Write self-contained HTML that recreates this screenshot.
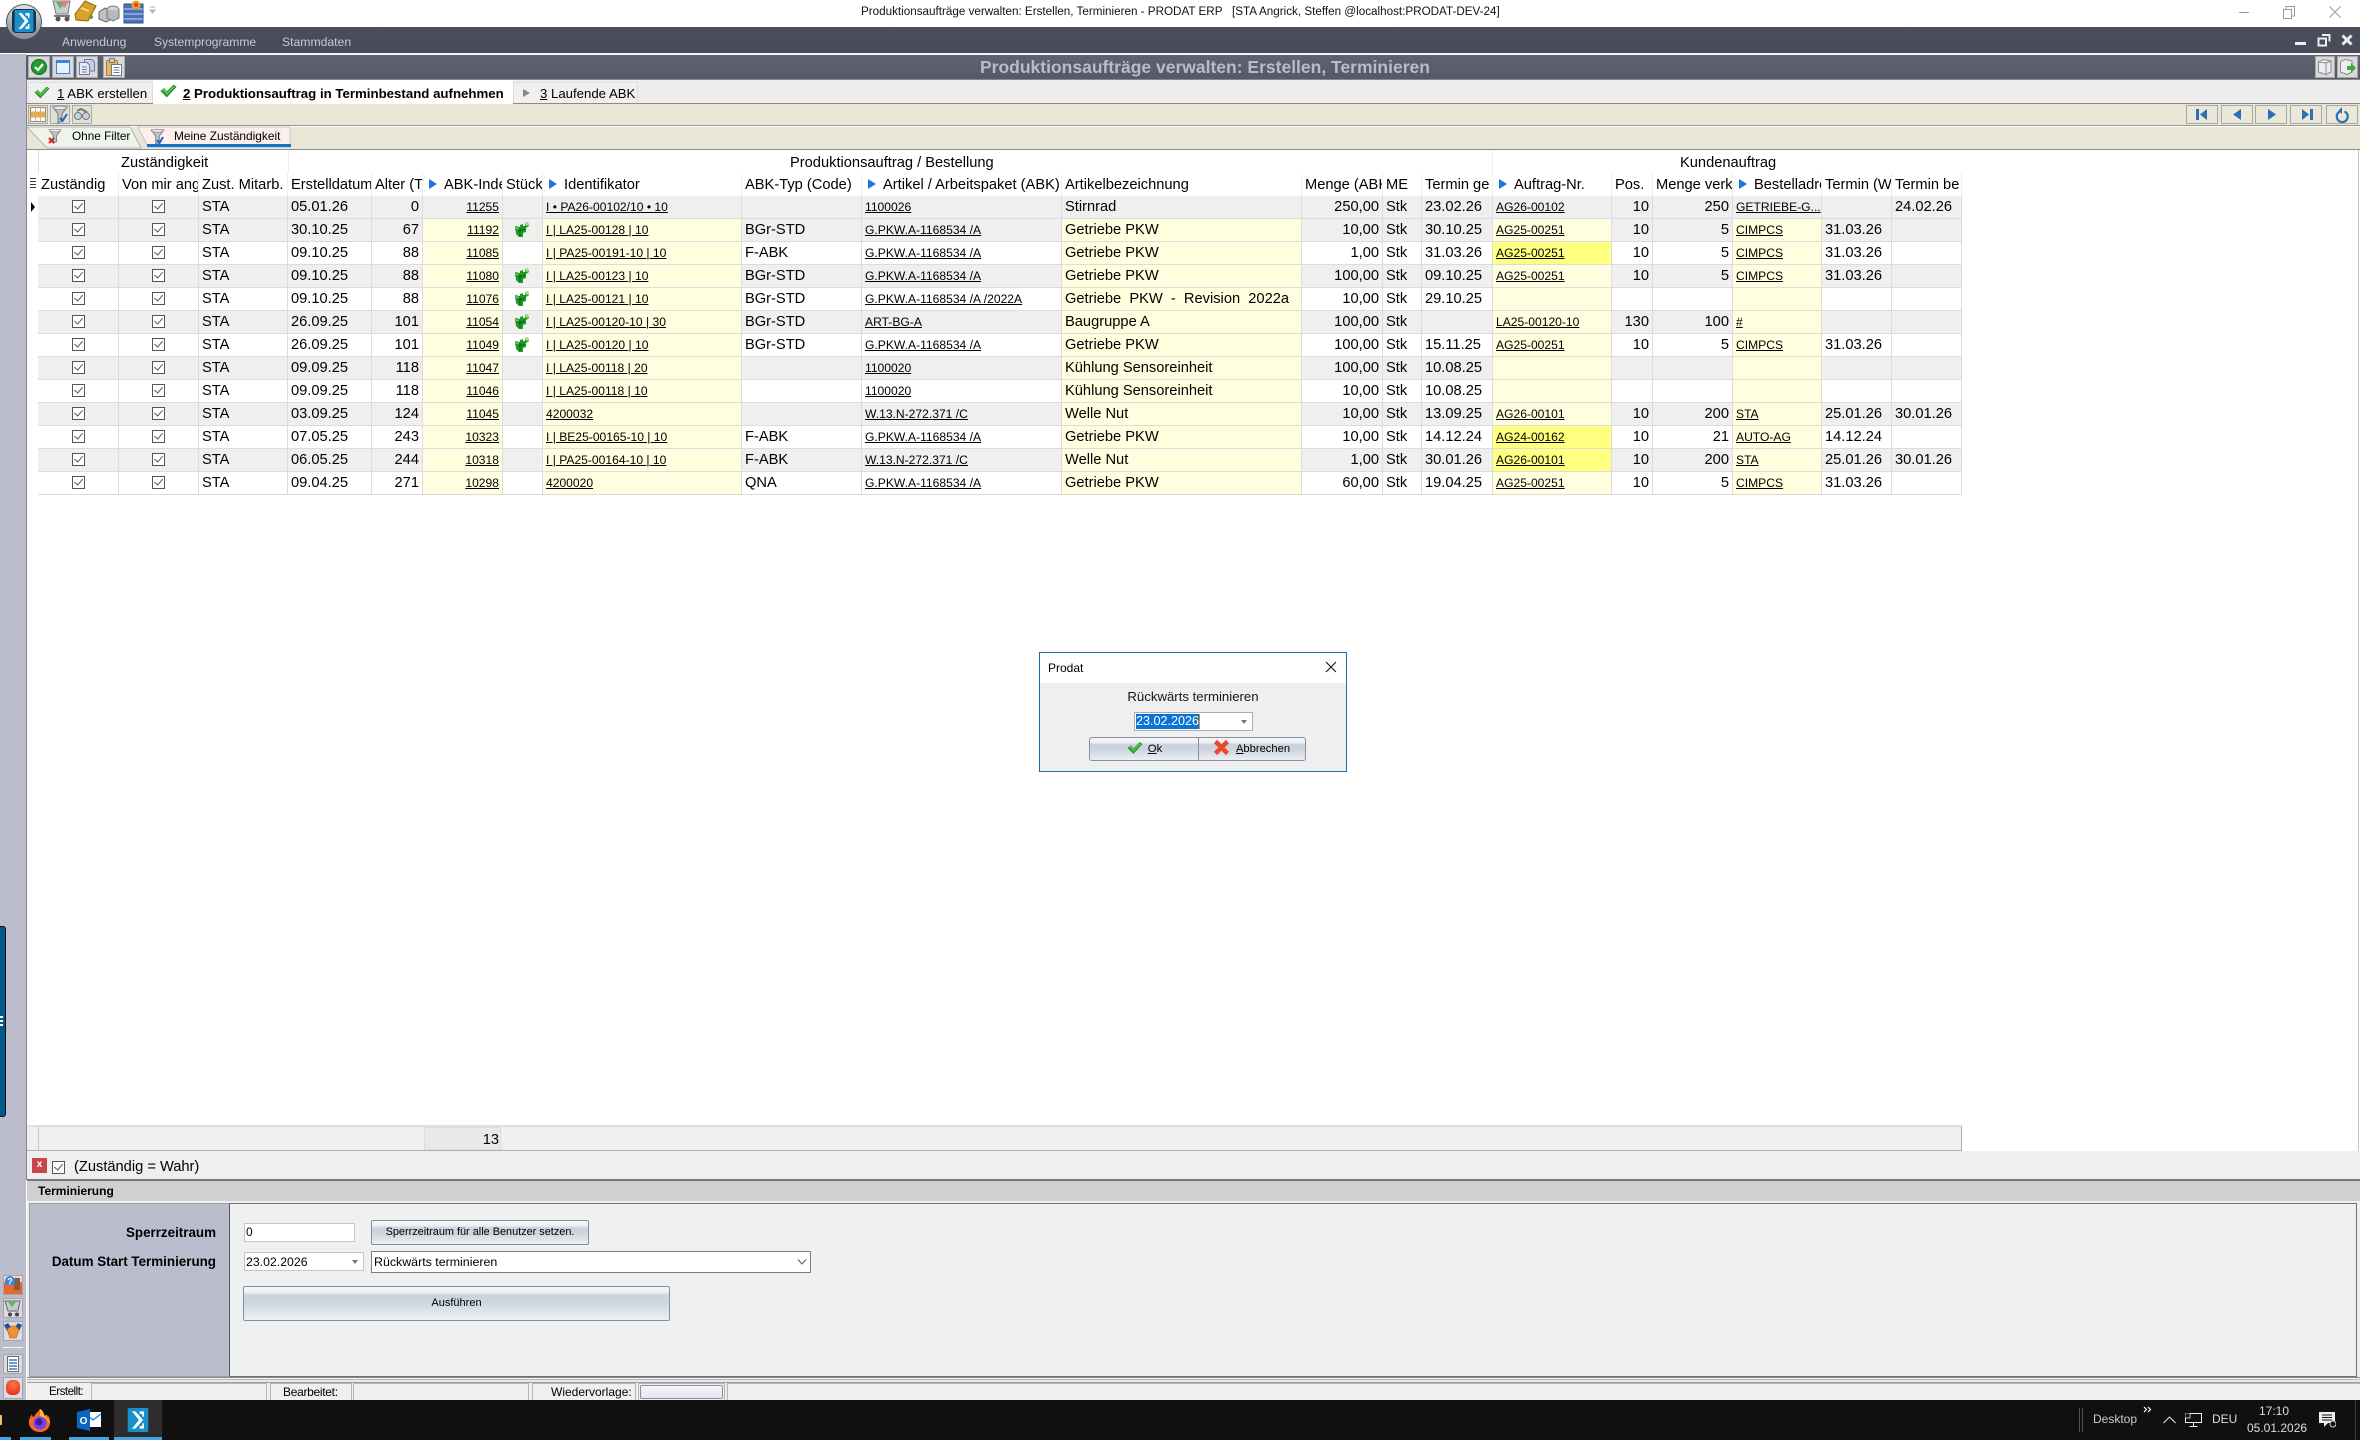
<!DOCTYPE html>
<html lang="de"><head><meta charset="utf-8"><title>Produktionsaufträge verwalten</title>
<style>
html,body{margin:0;padding:0;background:#fff}
body{width:2360px;height:1440px;position:relative;overflow:hidden;font-family:"Liberation Sans",sans-serif;color:#000}
.a{position:absolute}
.t{position:absolute;white-space:nowrap}
table{position:absolute;left:38px;top:173px;width:1924px;border-collapse:separate;border-spacing:0;table-layout:fixed;font-size:14.67px}
td,th{height:22px;padding:0 3px;box-sizing:content-box;overflow:hidden;white-space:nowrap;font-weight:normal;text-align:left;border-right:1px solid #dcdcdc;border-bottom:1px solid #dcdcdc;line-height:22px}
th{background:#fff;border-bottom:0;border-right:1px solid #eee;padding:2px 1px 0 3px;position:relative;height:21px;line-height:21px}
th.ar{padding-left:21px}
th.ar:before{content:"";position:absolute;left:6px;top:6px;border-left:8px solid #1b78d8;border-top:5px solid transparent;border-bottom:5px solid transparent}
tr.g td{background:#efefef}
tr td.y,tr.g td.y{background:#ffffe0}
tr td.Y,tr.g td.Y{background:#ffff80}
td.r{text-align:right}
td.c{text-align:center;padding:0;height:22px}
td.l{font-size:12.1px;text-decoration:underline}
i.cb{display:inline-block;width:11px;height:11px;border:1px solid #555;background:#fff;position:relative;vertical-align:-2px}
i.cb:after{content:"";position:absolute;left:3px;top:0;width:4px;height:7px;border-right:1px solid #555;border-bottom:1px solid #555;transform:rotate(40deg)}
td svg{display:block;margin:0 0 2px 11px}
.btn{position:absolute;box-sizing:border-box;border:1px solid #8a8e98;border-radius:2px;background:linear-gradient(#f2f4f6 0,#eef0f3 20%,#c9d3de 30%,#cdd6df 55%,#edeff2 100%);text-align:center}
.tb{position:absolute;box-sizing:border-box;border:1px solid #a9a9a9;background:#e6e6e6}
.nav{position:absolute;top:105px;width:32px;height:19px;box-sizing:border-box;border:1px solid #a8a8a8;background:#ebe8d9}
.si{position:absolute;left:3px;width:20px;height:20px;box-sizing:border-box;border:1px solid #a6a6a6;background:#dcdce0}
.st{position:absolute;top:1383px;height:17px;box-sizing:border-box;border-left:1px solid #b5b5b5;border-top:1px solid #b5b5b5;border-right:1px solid #b5b5b5}
.tu{position:absolute;top:1437px;height:3px;background:#4aa3e0}
</style></head><body>

<svg width="0" height="0" style="position:absolute"><defs>
<symbol id="pz" viewBox="0 0 15 15"><path d="M1 4 L6 5 L6 3 L9 2 L9 4 L11 4 L11 1 L14 0 L15 4 L12 6 L12 10 L9 11 L9 15 L5 15 L2 12 Z" fill="#1f9a25"/><path d="M6 6 L6 14 M1.5 7 L6 9 M6 9 L11 7" stroke="#0b5e10" stroke-width="1" fill="none"/><path d="M11 1 L14 0 L15 3 L12 4 Z" fill="#9be87a"/><path d="M2 5 L5 6 L4 8 L2 7 Z" fill="#62cf58"/></symbol>
<symbol id="ck" viewBox="0 0 20 16"><path d="M1 8 L5 5 L8 9 L16 1 L19 3 L8 15 Z" fill="#2f9e2f" stroke="#1f7a24" stroke-width=".6"/><path d="M3 8 L5 6.5 L8 11 L17 2.5" stroke="#7fd67a" fill="none" stroke-width="1"/></symbol>
<symbol id="fn" viewBox="0 0 16 18"><path d="M1 1 H15 L10 8 V15 L6 17 V8 Z" fill="#bfc2c6" stroke="#74777b" stroke-width="1"/><ellipse cx="8" cy="2" rx="7" ry="1.5" fill="#eceded" stroke="#74777b" stroke-width=".6"/></symbol>
<symbol id="prod" viewBox="0 0 24 28"><path d="M2 0 H22 Q24 0 24 2 V26 Q24 28 22 28 H2 Q0 28 0 26 V2 Q0 0 2 0 Z" fill="#1a8fc8"/><path d="M5 4 H9 L18 14 L9 24 H5 L13 14 Z M14 4 H19 V10 H17 V7 H14 Z M14 24 H19 V18 H17 V21 H14 Z" fill="#fff"/></symbol>
</defs></svg>

<!-- window title bar -->
<div class="a" style="left:0;top:0;width:2360px;height:27px;background:#fff"></div>
<div class="t" style="left:861px;top:5px;font-size:11.67px;line-height:14px;color:#111;white-space:pre">Produktionsaufträge verwalten: Erstellen, Terminieren - PRODAT ERP   [STA Angrick, Steffen @localhost:PRODAT-DEV-24]</div>
<!-- quick access -->
<svg class="a" style="left:50px;top:0" width="108" height="24" viewBox="0 0 108 24">
<path d="M3 1 H20 L18 14 H6 Z" fill="#c9ccd3" stroke="#7a7f8c"/><path d="M6 2 L10 9 L15 2 Z" fill="#5cb85c"/><path d="M10 1 L14 8 L19 1 Z" fill="#e27c7c"/><circle cx="8" cy="19" r="2.5" fill="#555"/><circle cx="17" cy="19" r="2.5" fill="#555"/><path d="M4 16 H20" stroke="#777" stroke-width="2"/>
<path d="M25 14 L35 1 L46 6 L38 21 L26 20 Z" fill="#d9a128" stroke="#8f6510"/><path d="M31 8 L39 11" stroke="#f2dc8e" stroke-width="2"/><circle cx="41" cy="17" r="2" fill="#4da64d"/>
<path d="M49 12 L55 8 L62 12 V19 L56 22 L49 19 Z" fill="#bfc1c4" stroke="#666"/><ellipse cx="63" cy="10" rx="6" ry="4" fill="#d2d4d6" stroke="#777"/><path d="M57 10 V18 L63 21 L69 18 V10" fill="#b7b9bc" stroke="#777"/>
<rect x="74" y="4" width="19" height="19" fill="#4a72b8" stroke="#2f4d86"/><path d="M74 9 H93 M74 14 H93 M74 19 H93" stroke="#c9d6ec" stroke-width="1"/><circle cx="86" cy="5" r="4.5" fill="#f0a020"/><circle cx="86" cy="5" r="2" fill="#e0402a"/>
<path d="M100 7 H105 M100 10 H105 L102.5 13 Z" stroke="#aeb2ba" fill="#aeb2ba"/>
</svg>
<!-- window controls -->
<div class="a" style="left:2239px;top:12px;width:10px;height:1px;background:#9a9a9a"></div>
<svg class="a" style="left:2283px;top:6px" width="12" height="13"><path d="M.5 3.5 H8.5 V12.5 H.5 Z M3 3 V.5 H11.5 V10 H9" fill="none" stroke="#9a9a9a"/></svg>
<svg class="a" style="left:2329px;top:6px" width="12" height="12"><path d="M.5 .5 L11.5 11.5 M11.5 .5 L.5 11.5" stroke="#9a9a9a"/></svg>

<!-- menu bar -->
<div class="a" style="left:0;top:27px;width:2360px;height:26px;background:linear-gradient(#4b4e5c,#474a58)"></div>
<div class="t" style="left:62px;top:35px;font-size:12.2px;line-height:14px;color:#c9cad0">Anwendung</div>
<div class="t" style="left:154px;top:35px;font-size:12.1px;line-height:14px;color:#c9cad0">Systemprogramme</div>
<div class="t" style="left:282px;top:35px;font-size:12.2px;line-height:14px;color:#c9cad0">Stammdaten</div>
<div class="a" style="left:2295px;top:42px;width:11px;height:3px;background:#eee"></div>
<svg class="a" style="left:2317px;top:33px" width="14" height="14"><path d="M1.5 5.5 H9 V12.5 H1.5 Z" fill="none" stroke="#eee" stroke-width="2"/><path d="M5 2 H12.5 V8.5" fill="none" stroke="#eee" stroke-width="2"/></svg>
<svg class="a" style="left:2341px;top:34px" width="12" height="12"><path d="M1.5 1.5 L10.5 10.5 M10.5 1.5 L1.5 10.5" stroke="#eee" stroke-width="3"/></svg>

<!-- logo -->
<div class="a" style="left:6px;top:4px;width:36px;height:36px;border-radius:50%;box-sizing:border-box;border:1px solid #50525a;background:linear-gradient(#e0e1e6,#a8aab4 55%,#8d8f9a)"></div>
<div class="a" style="left:12px;top:9px;width:24px;height:24px;border-radius:4px;background:#12384f"></div>
<svg class="a" style="left:13px;top:10px" width="22" height="22"><use href="#prod"/></svg>

<!-- left strip -->
<div class="a" style="left:0;top:54px;width:26px;height:1346px;background:#bbbdcd"></div>
<div class="a" style="left:26px;top:54px;width:1px;height:1126px;background:#85868f"></div>
<div class="a" style="left:0;top:926px;width:6px;height:191px;background:#005a8e;border:1px solid #111;border-left:0;border-radius:0 3px 3px 0;box-sizing:border-box"></div>
<div class="a" style="left:0;top:1016px;width:3px;height:2px;background:#fff"></div><div class="a" style="left:0;top:1020px;width:3px;height:2px;background:#fff"></div><div class="a" style="left:0;top:1024px;width:3px;height:2px;background:#fff"></div>

<!-- title strip -->
<div class="a" style="left:26px;top:53px;width:2334px;height:2px;background:#f4f4f6"></div>
<div class="a" style="left:26px;top:55px;width:2334px;height:24px;background:linear-gradient(#5e6173,#565969);border-bottom:1px solid #888"></div>
<div class="t" style="left:980px;top:57px;font-size:17.5px;line-height:20px;font-weight:bold;color:#b9bbca">Produktionsaufträge verwalten: Erstellen, Terminieren</div>
<div class="tb" style="left:28px;top:56px;width:22px;height:22px;background:#d9d9dc"></div>
<svg class="a" style="left:31px;top:59px" width="16" height="16"><circle cx="8" cy="8" r="7.5" fill="#1f9e2f" stroke="#15651d"/><path d="M4 8 L7 11 L12 5" stroke="#fff" stroke-width="2.2" fill="none"/></svg>
<div class="tb" style="left:52px;top:56px;width:22px;height:22px;background:#d9d9dc"></div>
<div class="a" style="left:56px;top:60px;width:14px;height:14px;box-sizing:border-box;border:1px solid #3a87d8;border-top-width:3px;background:#e8f2fc"></div>
<div class="tb" style="left:76px;top:56px;width:22px;height:22px;background:#d9d9dc"></div>
<svg class="a" style="left:79px;top:59px" width="16" height="16"><path d="M5.5 .5 H13 L15.5 3 V12 H5.5 Z" fill="#c5cfe8" stroke="#6b7aa6"/><path d="M.5 3.5 H8 L10.5 6 V15.5 H.5 Z" fill="#e8ecf7" stroke="#6b7aa6"/><path d="M3 8 H8 M3 10.5 H8 M3 13 H8" stroke="#6b7aa6"/></svg>
<div class="tb" style="left:103px;top:56px;width:22px;height:22px;background:#d9d9dc"></div>
<svg class="a" style="left:106px;top:58px" width="16" height="18"><rect x=".5" y="2.5" width="11" height="15" fill="#e9b463" stroke="#b37f2a"/><rect x="3.5" y=".5" width="5" height="4" fill="#ccc" stroke="#777"/><rect x="5.5" y="6.5" width="10" height="11" fill="#fff" stroke="#6a7a96"/><path d="M7.5 9.5 H13.5 M7.5 12 H13.5 M7.5 14.5 H13.5" stroke="#6a7a96"/></svg>
<div class="tb" style="left:2315px;top:56px;width:20px;height:22px;background:#d9d9dc"></div>
<svg class="a" style="left:2318px;top:59px" width="14" height="16"><path d="M.5 3 L5 .5 L13 2 V13 L8 15.5 L.5 13 Z" fill="#eee" stroke="#8a8a8a"/><path d="M8 4 V15.5 M.5 3 L8 4 L13 2" stroke="#8a8a8a" fill="none"/></svg>
<div class="tb" style="left:2337px;top:56px;width:21px;height:22px;background:#d9d9dc"></div>
<svg class="a" style="left:2340px;top:59px" width="16" height="16"><path d="M.5 3 L5 .5 L12 2 V13 L7 15.5 L.5 13 Z" fill="#eee" stroke="#8a8a8a"/><path d="M7 7 H11 V4 L16 9 L11 14 V11 H7 Z" fill="#3ea83e"/></svg>

<!-- step tabs -->
<div class="a" style="left:27px;top:80px;width:2333px;height:23px;background:#eee"></div>
<div class="a" style="left:28px;top:82px;width:125px;height:21px;box-sizing:border-box;border:1px solid #ddd;border-bottom:0;background:#f0f0f0"></div>
<svg class="a" style="left:34px;top:86px" width="16" height="13"><use href="#ck"/></svg>
<div class="t" style="left:57px;top:86px;font-size:13.2px;line-height:16px"><u>1</u> ABK erstellen</div>
<div class="a" style="left:153px;top:80px;width:360px;height:24px;background:#fff"></div>
<svg class="a" style="left:160px;top:84px" width="17" height="14"><use href="#ck"/></svg>
<div class="t" style="left:183px;top:86px;font-size:13.25px;line-height:16px;font-weight:bold"><u>2</u> Produktionsauftrag in Terminbestand aufnehmen</div>
<div class="a" style="left:513px;top:82px;width:125px;height:21px;box-sizing:border-box;border:1px solid #ddd;border-bottom:0;background:#f0f0f0"></div>
<div class="a" style="left:523px;top:89px;border-left:7px solid #888;border-top:4px solid transparent;border-bottom:4px solid transparent"></div>
<div class="t" style="left:540px;top:86px;font-size:13.2px;line-height:16px"><u>3</u> Laufende ABK</div>

<!-- beige toolbar -->
<div class="a" style="left:27px;top:103px;width:126px;height:1px;background:#8b8b8b"></div>
<div class="a" style="left:513px;top:103px;width:1847px;height:1px;background:#8b8b8b"></div>
<div class="a" style="left:27px;top:104px;width:2333px;height:21px;background:#e9e6d6;border-bottom:1px solid #969696"></div>
<div class="tb" style="left:28px;top:105px;width:20px;height:19px;background:#e1e0d3"></div>
<svg class="a" style="left:30px;top:107px" width="16" height="15"><rect x=".5" y=".5" width="15" height="14" fill="#fff" stroke="#a58a5a"/><rect x="1" y="5" width="14" height="5" fill="#f3a93a"/><path d="M5.5 .5 V14.5 M10.5 .5 V14.5 M.5 5 H15.5 M.5 10 H15.5" stroke="#c9b48a"/></svg>
<div class="tb" style="left:50px;top:105px;width:20px;height:19px;background:#e1e0d3"></div>
<svg class="a" style="left:52px;top:106px" width="16" height="18"><use href="#fn"/><path d="M8 12 L10.5 15 L15 8" stroke="#1f65c9" stroke-width="2" fill="none"/></svg>
<div class="tb" style="left:72px;top:105px;width:20px;height:19px;background:#e1e0d3"></div>
<svg class="a" style="left:74px;top:108px" width="16" height="13"><circle cx="4" cy="8" r="3.5" fill="#c6d4e2" stroke="#777"/><circle cx="12" cy="8" r="3.5" fill="#c6d4e2" stroke="#777"/><path d="M3 3 L7 1 L13 4" stroke="#777" stroke-width="2" fill="none"/></svg>
<!-- nav -->
<div class="nav" style="left:2186px"></div><div class="nav" style="left:2221px"></div><div class="nav" style="left:2255px"></div><div class="nav" style="left:2290px"></div><div class="nav" style="left:2326px"></div>
<svg class="a" style="left:2196px;top:108px" width="12" height="13"><path d="M1.5 1 V12" stroke="#2d6fb4" stroke-width="3"/><path d="M11 1 V12 L4 6.5 Z" fill="#2d6fb4"/></svg>
<svg class="a" style="left:2232px;top:108px" width="10" height="13"><path d="M9 1 V12 L1 6.5 Z" fill="#2d6fb4"/></svg>
<svg class="a" style="left:2267px;top:108px" width="10" height="13"><path d="M1 1 V12 L9 6.5 Z" fill="#2d6fb4"/></svg>
<svg class="a" style="left:2301px;top:108px" width="12" height="13"><path d="M1 1 V12 L8 6.5 Z" fill="#2d6fb4"/><path d="M10.5 1 V12" stroke="#2d6fb4" stroke-width="3"/></svg>
<svg class="a" style="left:2335px;top:107px" width="14" height="16"><path d="M5 4.5 A5.5 5.5 0 1 0 9.5 4.5" fill="none" stroke="#2d6fb4" stroke-width="2.2"/><path d="M7 0 V7 L3.5 3.5 Z" fill="#2d6fb4"/></svg>

<!-- filter tabs -->
<div class="a" style="left:27px;top:126px;width:2333px;height:23px;background:#e9e6d6;border-top:1px solid #fff"></div>
<svg class="a" style="left:26px;top:126px" width="270" height="24"><polygon points="1,1 104,1 115,22 21,22" fill="#eef4ec" stroke="#b4b4b4"/><polygon points="112,1 264,1 264,21 122,21" fill="#fdefed" stroke="#c4c4c4"/><rect x="121" y="18" width="144" height="3" fill="#1075c8"/></svg>
<svg class="a" style="left:48px;top:129px" width="14" height="15"><use href="#fn"/><path d="M1 9 L6 14 M6 9 L1 14" stroke="#d5281f" stroke-width="2"/></svg>
<div class="t" style="left:72px;top:129px;font-size:11.8px;line-height:14px">Ohne Filter</div>
<svg class="a" style="left:150px;top:129px" width="15" height="16"><use href="#fn"/><path d="M7 11 L9.5 14 L13 8" stroke="#1f65c9" stroke-width="2" fill="none"/></svg>
<div class="t" style="left:174px;top:129px;font-size:11.9px;line-height:14px">Meine Zuständigkeit</div>
<div class="a" style="left:27px;top:149px;width:2333px;height:1px;background:#8a8a8a"></div>

<!-- group headers -->
<div class="a" style="left:38px;top:150px;width:1px;height:23px;background:#ddd"></div>
<div class="a" style="left:288px;top:150px;width:1px;height:23px;background:#eee"></div>
<div class="a" style="left:1492px;top:150px;width:1px;height:23px;background:#eee"></div>
<div class="t" style="left:121px;top:154px;font-size:14.67px;line-height:18px">Zuständigkeit</div>
<div class="t" style="left:790px;top:154px;font-size:14.67px;line-height:18px">Produktionsauftrag / Bestellung</div>
<div class="t" style="left:1680px;top:154px;font-size:14.67px;line-height:18px">Kundenauftrag</div>
<!-- grip + row pointer -->
<div class="a" style="left:30px;top:178px;width:6px;height:11px;background:repeating-linear-gradient(#333 0 1px,transparent 1px 3px)"></div>
<div class="a" style="left:31px;top:202px;border-left:4px solid #000;border-top:5px solid transparent;border-bottom:5px solid transparent"></div>

<table>
<colgroup><col style="width:81px"><col style="width:80px"><col style="width:89px"><col style="width:84px"><col style="width:51px"><col style="width:80px"><col style="width:40px"><col style="width:199px"><col style="width:120px"><col style="width:200px"><col style="width:240px"><col style="width:81px"><col style="width:39px"><col style="width:71px"><col style="width:119px"><col style="width:41px"><col style="width:80px"><col style="width:89px"><col style="width:70px"><col style="width:70px"></colgroup>
<tr><th>Zuständig</th><th>Von mir angelegt</th><th>Zust. Mitarb.</th><th>Erstelldatum</th><th>Alter (Tage)</th><th class="ar">ABK-Index</th><th>Stückliste</th><th class="ar">Identifikator</th><th>ABK-Typ (Code)</th><th class="ar">Artikel / Arbeitspaket (ABK)</th><th>Artikelbezeichnung</th><th>Menge (ABK)</th><th>ME</th><th>Termin ge</th><th class="ar">Auftrag-Nr.</th><th>Pos.</th><th>Menge verk</th><th class="ar">Bestelladresse</th><th>Termin (Wunsch)</th><th>Termin be</th></tr>
<tr class="g"><td class="c"><i class="cb"></i></td><td class="c"><i class="cb"></i></td><td>STA</td><td>05.01.26</td><td class="r">0</td><td class="r l">11255</td><td></td><td class="l">I • PA26-00102/10 • 10</td><td></td><td class="l">1100026</td><td>Stirnrad</td><td class="r">250,00</td><td>Stk</td><td>23.02.26</td><td class="l">AG26-00102</td><td class="r">10</td><td class="r">250</td><td class="l">GETRIEBE-G...</td><td></td><td>24.02.26</td></tr>
<tr class="g"><td class="c"><i class="cb"></i></td><td class="c"><i class="cb"></i></td><td>STA</td><td>30.10.25</td><td class="r">67</td><td class="r l y">11192</td><td class="c"><svg width="15" height="15"><use href="#pz"/></svg></td><td class="l y">I | LA25-00128 | 10</td><td>BGr-STD</td><td class="l">G.PKW.A-1168534 /A</td><td class="y">Getriebe PKW</td><td class="r">10,00</td><td>Stk</td><td>30.10.25</td><td class="l y">AG25-00251</td><td class="r">10</td><td class="r">5</td><td class="l y">CIMPCS</td><td>31.03.26</td><td></td></tr>
<tr><td class="c"><i class="cb"></i></td><td class="c"><i class="cb"></i></td><td>STA</td><td>09.10.25</td><td class="r">88</td><td class="r l y">11085</td><td></td><td class="l y">I | PA25-00191-10 | 10</td><td>F-ABK</td><td class="l">G.PKW.A-1168534 /A</td><td class="y">Getriebe PKW</td><td class="r">1,00</td><td>Stk</td><td>31.03.26</td><td class="l Y">AG25-00251</td><td class="r">10</td><td class="r">5</td><td class="l y">CIMPCS</td><td>31.03.26</td><td></td></tr>
<tr class="g"><td class="c"><i class="cb"></i></td><td class="c"><i class="cb"></i></td><td>STA</td><td>09.10.25</td><td class="r">88</td><td class="r l y">11080</td><td class="c"><svg width="15" height="15"><use href="#pz"/></svg></td><td class="l y">I | LA25-00123 | 10</td><td>BGr-STD</td><td class="l">G.PKW.A-1168534 /A</td><td class="y">Getriebe PKW</td><td class="r">100,00</td><td>Stk</td><td>09.10.25</td><td class="l y">AG25-00251</td><td class="r">10</td><td class="r">5</td><td class="l y">CIMPCS</td><td>31.03.26</td><td></td></tr>
<tr><td class="c"><i class="cb"></i></td><td class="c"><i class="cb"></i></td><td>STA</td><td>09.10.25</td><td class="r">88</td><td class="r l y">11076</td><td class="c"><svg width="15" height="15"><use href="#pz"/></svg></td><td class="l y">I | LA25-00121 | 10</td><td>BGr-STD</td><td class="l">G.PKW.A-1168534 /A /2022A</td><td class="y" style="white-space:pre">Getriebe  PKW  -  Revision  2022a</td><td class="r">10,00</td><td>Stk</td><td>29.10.25</td><td class="y"></td><td></td><td></td><td class="y"></td><td></td><td></td></tr>
<tr class="g"><td class="c"><i class="cb"></i></td><td class="c"><i class="cb"></i></td><td>STA</td><td>26.09.25</td><td class="r">101</td><td class="r l y">11054</td><td class="c"><svg width="15" height="15"><use href="#pz"/></svg></td><td class="l y">I | LA25-00120-10 | 30</td><td>BGr-STD</td><td class="l">ART-BG-A</td><td class="y">Baugruppe A</td><td class="r">100,00</td><td>Stk</td><td></td><td class="l y">LA25-00120-10</td><td class="r">130</td><td class="r">100</td><td class="l y">#</td><td></td><td></td></tr>
<tr><td class="c"><i class="cb"></i></td><td class="c"><i class="cb"></i></td><td>STA</td><td>26.09.25</td><td class="r">101</td><td class="r l y">11049</td><td class="c"><svg width="15" height="15"><use href="#pz"/></svg></td><td class="l y">I | LA25-00120 | 10</td><td>BGr-STD</td><td class="l">G.PKW.A-1168534 /A</td><td class="y">Getriebe PKW</td><td class="r">100,00</td><td>Stk</td><td>15.11.25</td><td class="l y">AG25-00251</td><td class="r">10</td><td class="r">5</td><td class="l y">CIMPCS</td><td>31.03.26</td><td></td></tr>
<tr class="g"><td class="c"><i class="cb"></i></td><td class="c"><i class="cb"></i></td><td>STA</td><td>09.09.25</td><td class="r">118</td><td class="r l y">11047</td><td></td><td class="l y">I | LA25-00118 | 20</td><td></td><td class="l">1100020</td><td class="y">Kühlung Sensoreinheit</td><td class="r">100,00</td><td>Stk</td><td>10.08.25</td><td class="y"></td><td></td><td></td><td class="y"></td><td></td><td></td></tr>
<tr><td class="c"><i class="cb"></i></td><td class="c"><i class="cb"></i></td><td>STA</td><td>09.09.25</td><td class="r">118</td><td class="r l y">11046</td><td></td><td class="l y">I | LA25-00118 | 10</td><td></td><td class="l">1100020</td><td class="y">Kühlung Sensoreinheit</td><td class="r">10,00</td><td>Stk</td><td>10.08.25</td><td class="y"></td><td></td><td></td><td class="y"></td><td></td><td></td></tr>
<tr class="g"><td class="c"><i class="cb"></i></td><td class="c"><i class="cb"></i></td><td>STA</td><td>03.09.25</td><td class="r">124</td><td class="r l y">11045</td><td></td><td class="l y">4200032</td><td></td><td class="l">W.13.N-272.371 /C</td><td class="y">Welle Nut</td><td class="r">10,00</td><td>Stk</td><td>13.09.25</td><td class="l y">AG26-00101</td><td class="r">10</td><td class="r">200</td><td class="l y">STA</td><td>25.01.26</td><td>30.01.26</td></tr>
<tr><td class="c"><i class="cb"></i></td><td class="c"><i class="cb"></i></td><td>STA</td><td>07.05.25</td><td class="r">243</td><td class="r l y">10323</td><td></td><td class="l y">I | BE25-00165-10 | 10</td><td>F-ABK</td><td class="l">G.PKW.A-1168534 /A</td><td class="y">Getriebe PKW</td><td class="r">10,00</td><td>Stk</td><td>14.12.24</td><td class="l Y">AG24-00162</td><td class="r">10</td><td class="r">21</td><td class="l y">AUTO-AG</td><td>14.12.24</td><td></td></tr>
<tr class="g"><td class="c"><i class="cb"></i></td><td class="c"><i class="cb"></i></td><td>STA</td><td>06.05.25</td><td class="r">244</td><td class="r l y">10318</td><td></td><td class="l y">I | PA25-00164-10 | 10</td><td>F-ABK</td><td class="l">W.13.N-272.371 /C</td><td class="y">Welle Nut</td><td class="r">1,00</td><td>Stk</td><td>30.01.26</td><td class="l Y">AG26-00101</td><td class="r">10</td><td class="r">200</td><td class="l y">STA</td><td>25.01.26</td><td>30.01.26</td></tr>
<tr><td class="c"><i class="cb"></i></td><td class="c"><i class="cb"></i></td><td>STA</td><td>09.04.25</td><td class="r">271</td><td class="r l y">10298</td><td></td><td class="l y">4200020</td><td>QNA</td><td class="l">G.PKW.A-1168534 /A</td><td class="y">Getriebe PKW</td><td class="r">60,00</td><td>Stk</td><td>19.04.25</td><td class="l y">AG25-00251</td><td class="r">10</td><td class="r">5</td><td class="l y">CIMPCS</td><td>31.03.26</td><td></td></tr>
</table>

<!-- right edge of grid area -->
<div class="a" style="left:2358px;top:150px;width:1px;height:1001px;background:#c4c4c4"></div>

<!-- footer sum -->
<div class="a" style="left:27px;top:1125px;width:1935px;height:26px;box-sizing:border-box;background:#efefef;border-top:2px solid #dfdfe4;border-bottom:1px solid #b0b0b0;border-right:1px solid #b0b0b0"></div>
<div class="a" style="left:38px;top:1127px;width:1px;height:23px;background:#c8c8c8"></div>
<div class="a" style="left:424px;top:1127px;width:77px;height:23px;box-sizing:border-box;border:1px solid #dcdcdc;background:#e8eaea"></div>
<div class="t" style="left:424px;top:1131px;width:75px;text-align:right;font-size:14.67px;line-height:18px">13</div>

<!-- filter row -->
<div class="a" style="left:27px;top:1151px;width:2333px;height:28px;background:#efefef"></div>
<div class="a" style="left:32px;top:1158px;width:15px;height:15px;background:#c8464a;color:#fff;font-size:10px;line-height:14px;text-align:center;font-weight:bold">x</div>
<i class="cb a" style="left:52px;top:1159px"></i>
<div class="t" style="left:74px;top:1158px;font-size:14.67px;line-height:18px">(Zuständig = Wahr)</div>

<!-- Terminierung -->
<div class="a" style="left:27px;top:1179px;width:2333px;height:2px;background:#77787e"></div>
<div class="a" style="left:27px;top:1181px;width:2333px;height:20px;background:#d0d0d0"></div>
<div class="t" style="left:38px;top:1184px;font-size:12px;line-height:14px;font-weight:bold">Terminierung</div>
<div class="a" style="left:27px;top:1201px;width:2333px;height:178px;background:#eef0f2"></div>
<div class="a" style="left:29px;top:1203px;width:201px;height:174px;box-sizing:border-box;background:#bbbdcd;border:1px solid #9a9ba6;border-right:1px solid #55565e"></div>
<div class="a" style="left:230px;top:1203px;width:2127px;height:174px;box-sizing:border-box;background:#eff0f2;border:1px solid #6e6f74;border-left:0"></div>
<div class="t" style="right:2144px;top:1225px;font-size:13.4px;line-height:16px;font-weight:bold">Sperrzeitraum</div>
<div class="t" style="right:2144px;top:1254px;font-size:13.4px;line-height:16px;font-weight:bold">Datum Start Terminierung</div>
<div class="a" style="left:244px;top:1223px;width:111px;height:19px;box-sizing:border-box;background:#fff;border:1px solid #c4c6cc"></div>
<div class="t" style="left:246px;top:1225px;font-size:12px;line-height:15px">0</div>
<div class="btn" style="left:371px;top:1220px;width:218px;height:25px;font-size:10.9px;line-height:23px">Sperrzeitraum für alle Benutzer setzen.</div>
<div class="a" style="left:244px;top:1252px;width:120px;height:19px;box-sizing:border-box;background:#fff;border:1px solid #c4c6cc"></div>
<div class="t" style="left:246px;top:1255px;font-size:12.3px;line-height:15px">23.02.2026</div>
<div class="a" style="left:352px;top:1260px;border-top:4px solid #777;border-left:3px solid transparent;border-right:3px solid transparent"></div>
<div class="a" style="left:371px;top:1251px;width:440px;height:22px;box-sizing:border-box;background:#fff;border:1px solid #7d7e84"></div>
<div class="t" style="left:374px;top:1255px;font-size:12.4px;line-height:15px">Rückwärts terminieren</div>
<svg class="a" style="left:797px;top:1258px" width="10" height="8"><path d="M1 1.5 L5 6 L9 1.5" fill="none" stroke="#555"/></svg>
<div class="btn" style="left:243px;top:1286px;width:427px;height:35px;font-size:11px;line-height:33px;background:linear-gradient(#f6f7f8 0,#eef0f3 15%,#c9d3de 27%,#cfd8e0 50%,#eef0f3 100%)">Ausführen</div>

<!-- status bar -->
<div class="a" style="left:27px;top:1377px;width:2333px;height:1px;background:#8c8c8c"></div>
<div class="a" style="left:27px;top:1379px;width:2333px;height:4px;box-sizing:border-box;border-top:1px solid #bdbdbd;border-bottom:1px solid #9f9f9f;background:#e8e8e8"></div>
<div class="a" style="left:27px;top:1383px;width:2333px;height:17px;background:#efefef"></div>
<div class="t" style="left:49px;top:1385px;font-size:11.6px;line-height:14px;letter-spacing:-.5px">Erstellt:</div>
<div class="st" style="left:91px;width:176px"></div>
<div class="st" style="left:270px;width:82px"></div>
<div class="t" style="left:283px;top:1385px;font-size:12px;line-height:14px;letter-spacing:-.3px">Bearbeitet:</div>
<div class="st" style="left:353px;width:176px"></div>
<div class="st" style="left:532px;width:104px"></div>
<div class="t" style="left:551px;top:1385px;font-size:12px;line-height:14px">Wiedervorlage:</div>
<div class="st" style="left:638px;width:87px"></div>
<div class="a" style="left:640px;top:1385px;width:83px;height:14px;box-sizing:border-box;border:1px solid #8a8e98;border-radius:2px;background:linear-gradient(#f4f6f8,#e2e8ef)"></div>
<div class="st" style="left:727px;width:1633px;border-right:0"></div>

<!-- side icons -->
<div class="si" style="top:1275px"></div>
<svg class="a" style="left:4px;top:1276px" width="18" height="18"><rect x="0" y="6" width="18" height="12" fill="#e8692c"/><path d="M10 2 H16 V14 H10 Z" fill="#8b5a3a"/><circle cx="6" cy="5" r="5" fill="#3b86d9"/><text x="6" y="8.5" font-size="9" font-weight="bold" fill="#fff" text-anchor="middle" font-family="Liberation Sans">?</text></svg>
<div class="si" style="top:1298px"></div>
<svg class="a" style="left:4px;top:1299px" width="18" height="18"><path d="M1 2 H16 L14 12 H4 Z" fill="#c6c9d0" stroke="#666"/><path d="M4 3 L8 8 L12 3 Z" fill="#5cb85c"/><circle cx="6" cy="15.5" r="2" fill="#444"/><circle cx="13" cy="15.5" r="2" fill="#444"/></svg>
<div class="si" style="top:1321px"></div>
<svg class="a" style="left:4px;top:1322px" width="18" height="18"><path d="M0 3 L4 1 L7 5 L3 9 Z M18 3 L14 1 L11 5 L15 9 Z" fill="#1f4f9e"/><path d="M3 7 L8 4 L12 4 L15 8 L12 16 L6 16 Z" fill="#f09030" stroke="#b05a10" stroke-width=".6"/></svg>
<div class="a" style="left:3px;top:1347px;width:20px;height:1px;background:#f4f4f4"></div>
<div class="si" style="top:1354px"></div>
<svg class="a" style="left:7px;top:1356px" width="12" height="16"><rect x=".5" y=".5" width="11" height="15" fill="#fff" stroke="#6a6a6a"/><path d="M2 4 H10 M2 7 H10 M2 10 H10 M2 13 H10" stroke="#3f78c0" stroke-width="1.5"/></svg>
<div class="si" style="top:1377px;height:22px"></div>
<div class="a" style="left:6px;top:1380px;width:14px;height:15px;border-radius:40%;background:radial-gradient(circle at 50% 30%,#ff7a50,#e02010)"></div>

<!-- dialog -->
<div class="a" style="left:1039px;top:652px;width:308px;height:120px;box-sizing:border-box;border:1px solid #1273b8;background:#efefef"></div>
<div class="a" style="left:1040px;top:653px;width:306px;height:30px;background:#fff"></div>
<div class="t" style="left:1048px;top:661px;font-size:12px;line-height:14px">Prodat</div>
<svg class="a" style="left:1325px;top:661px" width="12" height="12"><path d="M1 1 L11 11 M11 1 L1 11" stroke="#111" stroke-width="1.1"/></svg>
<div class="t" style="left:1039px;width:308px;top:689px;text-align:center;font-size:13.2px;line-height:16px;color:#21111a">Rückwärts terminieren</div>
<div class="a" style="left:1134px;top:712px;width:119px;height:19px;box-sizing:border-box;background:#fff;border:1px solid #a7adb5"></div>
<div class="t" style="left:1136px;top:714px;width:63px;height:15px;background:#0a74d2;color:#fff;font-size:12.6px;line-height:15px;border-right:1px solid #f08020">23.02.2026</div>
<div class="a" style="left:1241px;top:720px;border-top:4px solid #777;border-left:3px solid transparent;border-right:3px solid transparent"></div>
<div class="btn" style="left:1089px;top:737px;width:110px;height:24px;font-size:11.3px;line-height:22px;padding-left:22px;border-radius:3px 0 0 3px"><u>O</u>k</div>
<div class="btn" style="left:1198px;top:737px;width:108px;height:24px;font-size:11.2px;line-height:22px;padding-left:22px;border-radius:0 3px 3px 0"><u>A</u>bbrechen</div>
<svg class="a" style="left:1127px;top:741px" width="16" height="14"><use href="#ck"/></svg>
<svg class="a" style="left:1213px;top:739px" width="17" height="17"><path d="M2.5 2.5 L14.5 14.5 M14.5 2.5 L2.5 14.5" stroke="#e84a2a" stroke-width="4.5"/></svg>

<!-- taskbar -->
<div class="a" style="left:0;top:1400px;width:2360px;height:40px;background:#101010"></div>
<div class="a" style="left:0;top:1415px;width:2px;height:10px;background:#e2c46a"></div>
<div class="a" style="left:114px;top:1400px;width:48px;height:40px;background:#2d2d2d"></div>
<div class="tu" style="left:0;width:11px"></div><div class="tu" style="left:20px;width:31px"></div><div class="tu" style="left:69px;width:40px"></div><div class="tu" style="left:114px;width:48px"></div>
<svg class="a" style="left:28px;top:1408px" width="24" height="25" viewBox="0 0 24 25"><path d="M12 1 C16 3 15 6 17 8 C18 6 19 7 21 9 C24 15 21 24 12 24 C4 24 0 18 1 12 C2 9 3 8 4 6 C4 8 5 9 6 9 C7 6 9 5 12 1 Z" fill="#f46a25"/><path d="M12 1 C16 3 15 6 17 8 C19 10 22 12 21 16 C20 10 15 9 12 9 Z" fill="#fbc02d"/><circle cx="12" cy="15" r="6.5" fill="#7542e5"/><circle cx="11" cy="14" r="3.5" fill="#3d1f9e"/></svg>
<svg class="a" style="left:77px;top:1408px" width="24" height="24" viewBox="0 0 24 24"><rect x="9" y="4" width="15" height="15" fill="#fff"/><path d="M9 6 L16 12 L24 6" fill="none" stroke="#1f78d1" stroke-width="1.2"/><path d="M0 4 L13 1 V23 L0 20 Z" fill="#0a64c2"/><text x="6.5" y="16" font-size="10" font-weight="bold" fill="#fff" text-anchor="middle" font-family="Liberation Sans">O</text></svg>
<svg class="a" style="left:127px;top:1408px" width="22" height="24"><use href="#prod"/></svg>
<div class="a" style="left:2079px;top:1408px;width:1px;height:24px;background:#555"></div>
<div class="a" style="left:2082px;top:1408px;width:1px;height:24px;background:#555"></div>
<div class="t" style="left:2093px;top:1412px;font-size:12px;line-height:15px;color:#ccc">Desktop</div>
<svg class="a" style="left:2143px;top:1406px" width="9" height="7"><path d="M1 1 L3.5 3.5 L1 6 M5 1 L7.5 3.5 L5 6" fill="none" stroke="#fff" stroke-width="1.2"/></svg>
<svg class="a" style="left:2163px;top:1416px" width="13" height="8"><path d="M.5 7 L6.5 1 L12.5 7" fill="none" stroke="#ddd" stroke-width="1.1"/></svg>
<svg class="a" style="left:2185px;top:1413px" width="17" height="15"><path d="M.5 .5 H16.5 V9.5 H.5 Z M8.5 9.5 V13 M4.5 13.5 H12.5" fill="none" stroke="#eee"/><rect x="0" y="0" width="5" height="5" fill="#101010" stroke="#eee" stroke-width=".8"/></svg>
<div class="t" style="left:2212px;top:1412px;font-size:12px;line-height:15px;color:#ddd">DEU</div>
<div class="t" style="left:2247px;width:54px;top:1404px;text-align:center;font-size:12px;line-height:15px;color:#ddd">17:10</div>
<div class="t" style="left:2247px;top:1421px;font-size:12px;line-height:15px;color:#ddd">05.01.2026</div>
<svg class="a" style="left:2319px;top:1412px" width="17" height="16"><path d="M0 0 H16 V11 H9 L5 15 V11 H0 Z" fill="#eee"/><path d="M3 3 H13 M3 5.5 H13 M3 8 H13" stroke="#101010"/><circle cx="14" cy="12" r="3" fill="#101010" stroke="#ccc"/></svg>
<div class="a" style="left:2355px;top:1400px;width:1px;height:40px;background:#3a3a3a"></div>
</body></html>
